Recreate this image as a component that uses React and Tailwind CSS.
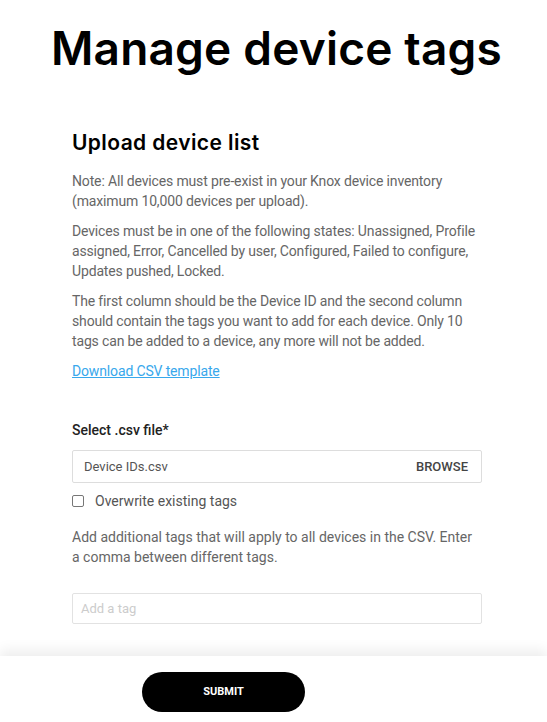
import React from 'react';

const App = () => {
  return (
    <div className="min-h-screen bg-white flex flex-col" style={{ fontFamily: 'Roboto, "Liberation Sans", sans-serif' }}>
      <main className="flex-1 flex flex-col">
        <h1
          className="text-center text-[46px] font-semibold leading-none tracking-[0.2px] text-black pt-[25px] pl-[6px]"
          style={{ fontFamily: 'Inter, "Liberation Sans", sans-serif' }}
        >
          Manage device tags
        </h1>

        <div className="ml-[72px] w-[410px] mt-[60px] text-[14px] leading-5 text-[#666]">
          <h2
            className="text-[21px] font-semibold text-black leading-6 tracking-[0.4px]"
            style={{ fontFamily: 'Inter, "Liberation Sans", sans-serif' }}
          >
            Upload device list
          </h2>

          <div className="tracking-[-0.15px]">
            <p className="mt-[16px]">
              Note: All devices must pre-exist in your Knox device inventory (maximum 10,000 devices per upload).
            </p>
            <p className="mt-[10px]">
              Devices must be in one of the following states: Unassigned, Profile assigned, Error, Cancelled by user, Configured, Failed to configure, Updates pushed, Locked.
            </p>
            <p className="mt-[10px]">
              The first column should be the Device ID and the second column should contain the tags you want to add for each device. Only 10 tags can be added to a device, any more will not be added.
            </p>
            <a href="#" className="block mt-[10px] text-[#38a8ec] underline w-fit">
              Download CSV template
            </a>
          </div>

          <label className="block mt-[39px] text-[#222] font-medium">Select .csv file*</label>
          <div className="mt-[10px] h-[33px] border border-[#ddd] rounded-[2px] flex items-center justify-between pl-[11px] pr-[13px] text-[13px]">
            <span className="text-[#555]">Device IDs.csv</span>
            <span className="text-[#444] font-medium">BROWSE</span>
          </div>
          <label className="mt-[8px] flex items-center gap-[11px] text-[#555]">
            <span className="w-[12px] h-[12px] border border-[#777] rounded-[2px]" />
            Overwrite existing tags
          </label>

          <p className="mt-[16px] w-[405px]">
            Add additional tags that will apply to all devices in the CSV. Enter a comma between different tags.
          </p>

          <div className="mt-[26px] h-[31px] border border-[#e2e2e2] rounded-[2px] flex items-center pl-[8px] text-[13px] text-[#ccc]">
            Add a tag
          </div>
        </div>
      </main>

      <footer className="h-[66px] bg-white shadow-[0_-6px_12px_rgba(0,0,0,0.07)] flex items-start pl-[142px] pt-[16px]">
        <button className="w-[163px] h-[40px] rounded-full bg-black text-white text-[11px] font-bold flex items-center justify-center">
          SUBMIT
        </button>
      </footer>
    </div>
  );
};

export default App;
